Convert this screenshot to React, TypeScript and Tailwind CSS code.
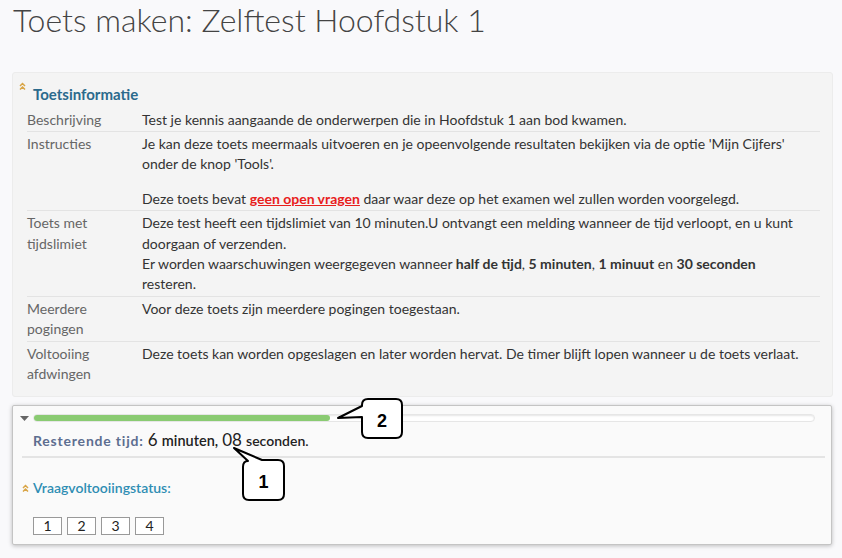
import type { ReactNode } from "react";

const rows: { label: ReactNode; body: ReactNode }[] = [
  {
    label: "Beschrijving",
    body: <p>Test je kennis aangaande de onderwerpen die in Hoofdstuk 1 aan bod kwamen.</p>,
  },
  {
    label: "Instructies",
    body: (
      <>
        <p>Je kan deze toets meermaals uitvoeren en je opeenvolgende resultaten bekijken via de optie 'Mijn Cijfers' onder de knop 'Tools'.</p>
        <p className="mt-[14px]">
          Deze toets bevat <span className="font-bold text-[#e8201c] underline">geen open vragen</span> daar waar deze op het examen wel zullen worden voorgelegd.
        </p>
      </>
    ),
  },
  {
    label: (
      <>
        Toets met
        <br />
        tijdslimiet
      </>
    ),
    body: (
      <>
        <p>Deze test heeft een tijdslimiet van 10 minuten.U ontvangt een melding wanneer de tijd verloopt, en u kunt doorgaan of verzenden.</p>
        <p>
          Er worden waarschuwingen weergegeven wanneer <b>half de tijd</b>, <b>5 minuten</b>, <b>1 minuut</b> en <b>30 seconden</b> resteren.
        </p>
      </>
    ),
  },
  {
    label: (
      <>
        Meerdere
        <br />
        pogingen
      </>
    ),
    body: <p>Voor deze toets zijn meerdere pogingen toegestaan.</p>,
  },
  {
    label: (
      <>
        Voltooiing
        <br />
        afdwingen
      </>
    ),
    body: <p>Deze toets kan worden opgeslagen en later worden hervat. De timer blijft lopen wanneer u de toets verlaat.</p>,
  },
];

function Chevrons() {
  return (
    <svg width="7" height="8" viewBox="0 0 7 8" className="shrink-0">
      <path d="M1 4 L3.5 1.5 L6 4 M1 7.5 L3.5 5 L6 7.5" stroke="#d9a546" strokeWidth="1.5" fill="none" />
    </svg>
  );
}

export default function App() {
  const progress = 38;
  return (
    <div className="relative h-[558px] w-[842px] overflow-hidden bg-[#f9f9fb] font-['Lato',sans-serif]">
      <h1 className="pl-[13px] pt-[1px] text-[32px] font-light leading-[38px] text-[#444]">Toets maken: Zelftest Hoofdstuk 1</h1>

      <div className="ml-[12px] mr-[9px] mt-[33px] rounded-[3px] border border-[#ececec] bg-[#f4f4f4] pb-[11px] pt-[9px]">
        <div className="flex items-start pl-[6px]">
          <Chevrons />
          <h2 className="ml-[7px] mt-[2px] text-[15px] font-bold leading-[20px] text-[#2b6a8c]">Toetsinformatie</h2>
        </div>
        <div className="ml-[14px] mr-[12px] mt-[3.5px] text-[14px] leading-[20.4px]">
          {rows.map((r, i) => (
            <div key={i} className={`flex pb-[1px] pt-[2px] ${i < rows.length - 1 ? "border-b border-[#e3e3e3]" : ""}`}>
              <div className="w-[115px] shrink-0 text-[#666]">{r.label}</div>
              <div className="flex-1 pr-[10px] text-[#333]">{r.body}</div>
            </div>
          ))}
        </div>
      </div>

      <div className="ml-[12px] mr-[10px] mt-[8px] rounded-[2px] border border-[#c4c4c4] bg-[#fafafa] pb-[9px] pt-[8px] shadow-[0_1px_4px_rgba(0,0,0,0.25)]">
        <div className="flex items-center pl-[7px] pr-[16px]">
          <svg width="9" height="5" viewBox="0 0 9 5" className="shrink-0">
            <path d="M0 0 H9 L4.5 5 Z" fill="#666" />
          </svg>
          <div className="ml-[4px] h-[8px] flex-1 rounded-full border border-[#e6e6e6] bg-white shadow-[inset_0_1px_2px_rgba(0,0,0,0.1)]">
            <div className="h-full rounded-full bg-[#8acb72]" style={{ width: `${progress}%` }} />
          </div>
        </div>
        <div className="mt-[8px] pl-[20px] leading-[20px] text-[#222]">
          <span className="text-[14px] font-bold tracking-[0.8px] text-[#5d6e90]">Resterende tijd:</span>{" "}
          <span className="text-[17px]">6</span> <span className="text-[14.5px] font-semibold">minuten,</span>{" "}
          <span className="text-[17px]">08</span> <span className="text-[14px] font-semibold">seconden.</span>
        </div>
        <div className="ml-[9px] mr-[6px] mt-[5px] border-b-2 border-[#e4e4e4]" />
        <div className="mt-[20px] flex items-center pl-[9px]">
          <Chevrons />
          <span className="ml-[4px] text-[14px] font-semibold leading-[20px] text-[#2e8db3]">Vraagvoltooiingstatus:</span>
        </div>
        <div className="mt-[19px] flex gap-[5px] pl-[20px]">
          {["1", "2", "3", "4"].map((n) => (
            <div key={n} className="flex h-[18px] w-[29px] items-center justify-center border border-[#999] bg-white text-[14px] leading-none text-[#222]">
              {n}
            </div>
          ))}
        </div>
      </div>

      <svg className="pointer-events-none absolute left-0 top-0" width="842" height="558">
        <path
          d="M368 399 H396 Q402 399 402 405 V432 Q402 438 396 438 H368 Q362 438 362 432 V417 L338 418 L362 406 V405 Q362 399 368 399 Z"
          fill="white"
          stroke="black"
          strokeWidth="2"
          strokeLinejoin="round"
        />
        <path
          d="M262 460 H278 Q284 460 284 466 V494 Q284 500 278 500 H249 Q243 500 243 494 V467 Q243 461 248 461 L234 448 Z"
          fill="white"
          stroke="black"
          strokeWidth="2"
          strokeLinejoin="round"
        />
      </svg>
      <div className="absolute left-[362px] top-[402px] flex h-[38px] w-[40px] items-center justify-center font-['Liberation_Sans',sans-serif] text-[18px] font-bold text-black">
        2
      </div>
      <div className="absolute left-[243px] top-[463px] flex h-[39px] w-[41px] items-center justify-center font-['Liberation_Sans',sans-serif] text-[18px] font-bold text-black">
        1
      </div>
    </div>
  );
}
